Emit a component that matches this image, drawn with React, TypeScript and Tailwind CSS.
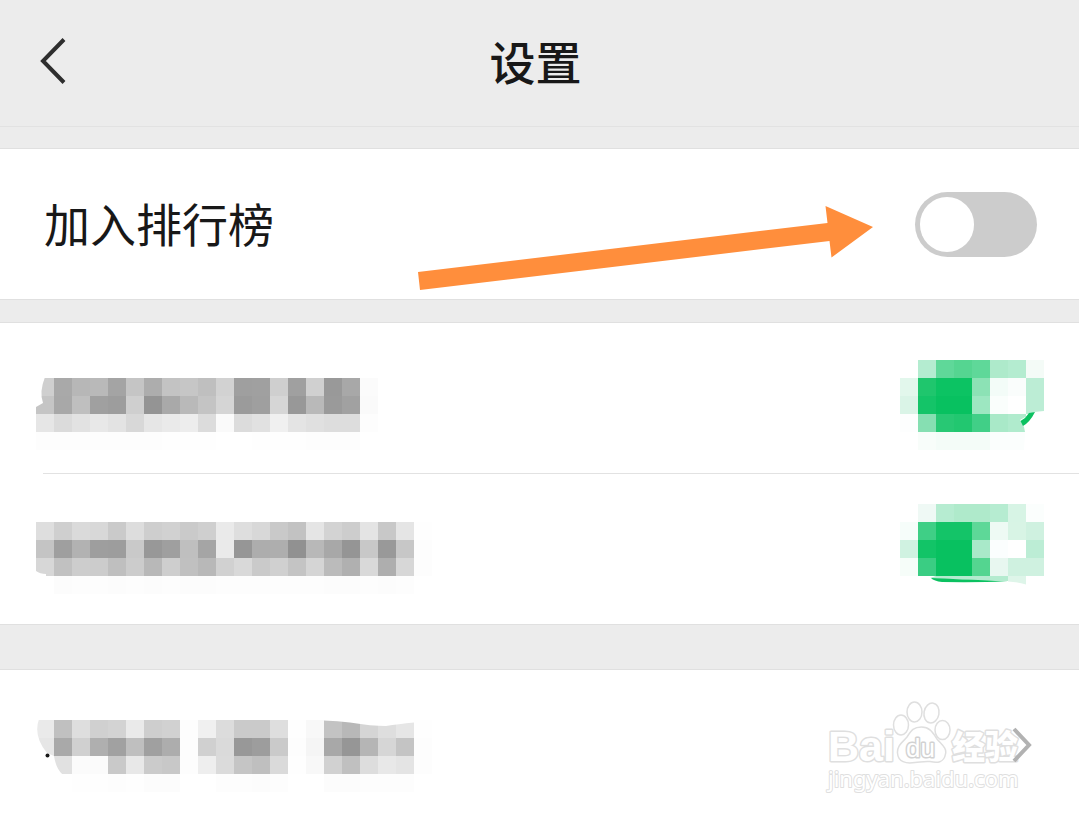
import React, { useState } from 'react';

const CELL = 18;

const Mosaic: React.FC<{ rows: string[]; top: number; width: number; children?: React.ReactNode }> = ({ rows, top, width, children }) => (
    <svg width={width} height="150" viewBox={`0 0 ${width} 150`} shapeRendering="crispEdges" aria-hidden="true">
        {rows.map((row, y) =>
            row.split(' ').map((color, x) =>
                color === '-' ? null : (
                    <rect
                        key={`${x}-${y}`}
                        x={x * CELL}
                        y={top + y * CELL}
                        width={CELL}
                        height={CELL}
                        fill={`#${color.length === 2 ? color.repeat(3) : color}`}
                    />
                )
            )
        )}
        <g shapeRendering="geometricPrecision">{children}</g>
    </svg>
);

const firstLabel = [
    'cf a9 b7 b9 a4 c5 ad c3 c6 bf d2 9f a0 cf a0 d0 99 a8 fb',
    'c5 a8 bf a0 9d cf 94 a9 b9 c4 d5 9b 9f d6 98 b9 9a a1 fa',
    'e6 db e2 e8 e3 d8 e6 ea ed dc fa dc e1 f0 e4 e0 dd dd fd',
    'fd fd fd fd fd fd fd fe fe fe - - fe fe fe fd fd fd -',
];

const secondLabel = [
    'de cf da d8 ca dd ce d1 ca cf ea de d8 c9 c2 e5 d3 cd e4 c8 e5 fe',
    'c4 9f b2 9e 9d c9 98 9f bf a5 ea 96 ad ae 91 b8 a8 95 c8 99 c7 fd',
    'd7 c1 cd cc bf cc b8 ce c0 b8 d1 d9 ca d0 c4 d5 bb b0 d9 ae d7 fd',
    '- fc fd fd fc fd fc fd fc fc fd fd fd fd fd fd fc fc fd fc fd -',
];

const thirdLabel = [
    'ea c0 de d0 d3 ea ce d1 fd f0 dc ca ca de fe f8 c3 b8 d5 de e6 fe',
    'e6 a9 d0 af a1 bf a0 ad fd d0 da 98 9d ca fd f5 a8 96 b5 d6 c4 fd',
    '- e1 fb fb c9 e8 cb c8 fd ee db c5 bf da fe f8 d1 c0 dd e8 e4 fd',
    '- - fe fe fd fe fc fc - - fd fd fc fd - - fc fc fd fd fd -',
];

const firstSwitch = [
    '- b4ecd0 5fd899 55d591 5fd899 aeeacb b4ecd0 f4fbf7',
    'e2f7ec 1fc66d 0cc363 0cc363 8ce2b5 f3fcf8 fafdfc bcedd5',
    'daf4e7 14c468 08c160 08c160 9de7c1 fafefc ffffff bcedd5',
    'fdfefe 86dfb2 28c874 22c770 41cf87 a9e9c8 b0ebcd -',
    '- f8fdfa f4fcf8 f4fcf8 f4fcf8 fbfefd fbfefd -',
];

const secondSwitch = [
    '- eff9f5 b6ecd1 afeacb afeacb b6ecd1 d7f4e5 fbfefd',
    'f6fdfa 3fcf86 14c468 14c468 5ed898 eefaf4 d8f4e5 cff1e0',
    'd0f2e1 12c467 08c160 08c160 a9e9c9 fbfefe ffffff bcedd5',
    'f6fdf9 3acd83 08c160 08c160 54d590 e8f7f0 cff1e0 cff1e0',
];

const Arrow: React.FC = () => (
    <svg className="absolute right-[205px] top-[55px] pointer-events-none" width="456" height="88" viewBox="0 0 456 88" aria-hidden="true">
        <path d="M0 68 L409.500 19 L407.500 2 L455 23 L413.500 53.500 L411.500 37 L2 86 Z" fill="#ff8e3c" />
    </svg>
);

const Watermark: React.FC = () => (
    <svg
        className="absolute right-[51px] top-[26px] pointer-events-none"
        width="204"
        height="104"
        viewBox="0 0 204 104"
        fill="#fff"
        stroke="#dfdfdf"
        strokeWidth="1.5"
        strokeLinejoin="round"
        aria-hidden="true"
    >
        <text x="4" y="65" fontSize="43" fontWeight="700" fontFamily="'Liberation Sans', Arial, sans-serif" paintOrder="stroke" strokeWidth="3">Bai</text>
        <ellipse cx="77" cy="29" rx="7.500" ry="10" />
        <ellipse cx="90.500" cy="16" rx="7.500" ry="10" />
        <ellipse cx="107.500" cy="17" rx="7.500" ry="10" transform="rotate(10 107.500 17)" />
        <ellipse cx="118.500" cy="34" rx="7.500" ry="9.500" />
        <path d="M97.500 31 C106 31 109 37 113 43 C118 49 123 52 121.500 58 C120 67 113 67 106 65.500 C100 65 97 66 91 66.500 C82 68 74 66 73.500 57 C73 49 79 46 83 41 C87 35 89 31 97.500 31 Z" />
        <text x="82" y="61" fontSize="26" fontFamily="'Liberation Sans', Arial, sans-serif" paintOrder="stroke" strokeWidth="3" stroke="#d2d2d2">du</text>
        <text x="128" y="63" fontSize="33" fontWeight="900" fontFamily="'Noto Sans CJK SC', sans-serif" paintOrder="stroke" strokeWidth="3">经验</text>
        <text x="4" y="91" fontSize="22" fontFamily="'Noto Sans', sans-serif" paintOrder="stroke" strokeWidth="2">jingyan.baidu.com</text>
    </svg>
);

const App: React.FC = () => {
    const [ranked, setRanked] = useState(false);

    return (
        <div className="min-h-screen bg-[#ececec] text-[#181818] font-['Noto_Sans_CJK_SC',sans-serif]">
            <header className="flex items-center h-[127px] px-[38px] pb-1.5 border-b border-[#e2e2e2]">
                <button type="button" aria-label="返回" className="w-8 h-16">
                    <svg width="32" height="64" viewBox="0 0 32 64" fill="none" stroke="#2e2e2e" strokeWidth="4" aria-hidden="true">
                        <path d="M26 11.500 L5 33 L26 54.500" />
                    </svg>
                </button>
                <h1 className="flex-1 text-center text-[46px] leading-[64px] font-medium">设置</h1>
                <div className="w-10" />
            </header>

            <main>
                <section className="relative mt-[21px] border-y border-[#e0e0e0] bg-white">
                    <div className="flex items-center justify-between h-[150px] pl-11 pr-[42px]">
                        <label htmlFor="ranking" className="pb-1 text-[46px] leading-[64px]">加入排行榜</label>
                        <input
                            id="ranking"
                            type="checkbox"
                            role="switch"
                            checked={ranked}
                            onChange={(e) => setRanked(e.target.checked)}
                            className="appearance-none flex items-center w-[122px] h-[65px] p-[5px] rounded-full bg-[#cccccc] checked:bg-[#07c160] checked:justify-end before:block before:w-[54px] before:h-[55px] before:rounded-full before:bg-white"
                        />
                    </div>
                    <Arrow />
                </section>

                <section className="mt-[22px] border-y border-[#e0e0e0] bg-white">
                    <div className="flex justify-between h-[150px] pl-9 pr-[35px]">
                        <Mosaic rows={firstLabel} top={55} width={342}>
                            <path d="M0 54 H9 Q3 69 7 80 L0 84 Z" fill="#fff" />
                        </Mosaic>
                        <button type="button" role="switch" aria-checked="true" aria-label="开关一">
                            <Mosaic rows={firstSwitch} top={37} width={144}>
                                <path d="M144 88 L134 89 L120 97 L124 104 L125 109 L124 128 H144 Z" fill="#fff" />
                                <path d="M135 89 L129 90 Q126 95 120.500 98 L123 103 Q130 99 135 89 Z" fill="#0bc160" />
                            </Mosaic>
                        </button>
                    </div>
                    <div className="ml-[43px] border-t border-[#e2e2e2]" />
                    <div className="flex justify-between h-[150px] pl-9 pr-[35px]">
                        <Mosaic rows={secondLabel} top={48} width={396}>
                            <path d="M0 97 Q4 100 10 100 V103 H0 Z" fill="#fff" />
                        </Mosaic>
                        <button type="button" role="switch" aria-checked="true" aria-label="开关二">
                            <Mosaic rows={secondSwitch} top={30} width={144}>
                                <path d="M36 102 H108 V107 H88 L30 104 Z" fill="#b4ebcf" />
                                <path d="M108 102 H126 V110.500 Q118 108 108 107.500 Z" fill="#def5e9" />
                                <path d="M31 104 Q55 105 108 107.500 Q75 108.500 42 108 Q34 107 31 104 Z" fill="#0bc160" />
                            </Mosaic>
                        </button>
                    </div>
                </section>

                <section className="relative mt-11 border-t border-[#e0e0e0] bg-white">
                    <Watermark />
                    <a href="#more" aria-label="更多" className="relative flex justify-between items-center h-[150px] pl-9 pr-[47px]">
                        <Mosaic rows={thirdLabel} top={50} width={396}>
                            <path d="M0 49 H3 Q-3 66 11 83 L18 86 Q20 99 27 105 H0 Z" fill="#fff" />
                            <path d="M288 49 V50.500 Q302 51 314 52.500 Q336 56 350 56 Q362 54 378 52.500 V49 Z" fill="#fff" />
                            <circle cx="11.500" cy="85.500" r="2" fill="#181818" />
                        </Mosaic>
                        <svg width="20" height="36" viewBox="0 0 20 36" fill="none" stroke="#b2b2b2" strokeWidth="4" aria-hidden="true">
                            <path d="M2 2 L17 18 L2 34" />
                        </svg>
                    </a>
                </section>
            </main>
        </div>
    );
};

export default App;
